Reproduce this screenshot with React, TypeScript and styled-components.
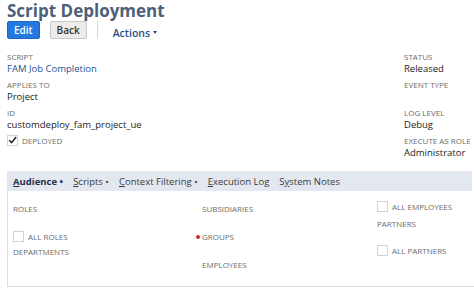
import React from 'react';
import styled, { createGlobalStyle } from 'styled-components';

const GlobalStyle = createGlobalStyle`
  html, body {
    margin: 0;
    padding: 0;
    background: #ffffff;
  }
  body {
    font-family: 'Open Sans', 'Liberation Sans', sans-serif;
    color: #222222;
  }
`;

const Page = styled.div`
  width: 474px;
  height: 294px;
  overflow: hidden;
  padding: 2px 0 0 7px;
  box-sizing: border-box;
`;

const Title = styled.h1`
  margin: 0;
  height: 17px;
  font-size: 17px;
  line-height: 17px;
  font-weight: 700;
  color: #4d5f79;
  white-space: nowrap;
`;

const ButtonRow = styled.div`
  display: flex;
  align-items: center;
  height: 18px;
  margin-top: 2px;
`;

const Button = styled.button<{ $primary?: boolean }>`
  height: 18px;
  padding: 0 6px;
  margin-right: 10px;
  border-radius: 2px;
  font-family: inherit;
  font-size: 10px;
  font-weight: 600;
  line-height: 16px;
  cursor: pointer;
  border: 1px solid ${({ $primary }) => ($primary ? '#1d67c4' : '#c9c9c9')};
  background: ${({ $primary }) => ($primary ? '#2379de' : '#ececec')};
  color: ${({ $primary }) => ($primary ? '#ffffff' : '#333333')};
`;

const Divider = styled.div`
  width: 1px;
  height: 18px;
  background: #d6d6d6;
  margin: 0 15px 0 0;
`;

const ActionsMenu = styled.span`
  font-size: 10.5px;
  font-weight: 600;
  color: #2c4f82;
  display: flex;
  align-items: center;
  gap: 3px;
  padding-top: 5px;
`;

const Caret = styled.span`
  width: 0;
  height: 0;
  border-left: 2.5px solid transparent;
  border-right: 2.5px solid transparent;
  border-top: 3px solid #2c4f82;
`;

const Fields = styled.div`
  display: flex;
  margin-top: 12px;
  height: 120px;
`;

const Column = styled.div<{ $width?: number }>`
  flex: ${({ $width }) => ($width ? `0 0 ${$width}px` : '1')};
`;

const Field = styled.div`
  margin-bottom: 4px;
`;

const Label = styled.div`
  font-size: 8px;
  line-height: 12px;
  height: 12px;
  text-transform: uppercase;
  color: #6b6b6b;
  white-space: nowrap;
`;

const Value = styled.div<{ $link?: boolean }>`
  font-size: 9.5px;
  line-height: 12px;
  height: 12px;
  color: ${({ $link }) => ($link ? '#25528f' : '#222222')};
  white-space: nowrap;
`;

const CheckRow = styled.div<{ $top?: number }>`
  display: flex;
  align-items: center;
  gap: 4px;
  margin-top: ${({ $top }) => $top ?? 0}px;
  height: 12px;
`;

const Box = styled.span`
  width: 11px;
  height: 11px;
  box-sizing: border-box;
  border: 1px solid #d3d3d3;
  background: #ffffff;
  display: inline-flex;
  align-items: center;
  justify-content: center;
`;

const CheckText = styled.span`
  font-size: 8px;
  color: #6b6b6b;
  text-transform: uppercase;
  white-space: nowrap;
`;

const TabBar = styled.div`
  display: flex;
  align-items: center;
  height: 20px;
  background: #e3e8f0;
  padding-left: 6px;
  margin-right: 2px;
`;

const Tab = styled.span<{ $active?: boolean }>`
  font-size: 9.5px;
  font-weight: ${({ $active }) => ($active ? 700 : 400)};
  color: ${({ $active }) => ($active ? '#26324a' : '#3a3a3a')};
  margin-right: 10px;
  white-space: nowrap;
  u {
    text-decoration-thickness: 1px;
    text-underline-offset: 1px;
  }
`;

const Panel = styled.div`
  border: 1px solid #dddddd;
  border-top: none;
  border-right: none;
  height: 96px;
  box-sizing: border-box;
  display: grid;
  grid-template-columns: 189px 175px 1fr;
  padding: 10px 0 0 5px;
`;

const PanelCol = styled.div``;

const PanelLabel = styled.div<{ $top?: number; $dot?: boolean }>`
  font-size: 8px;
  line-height: 12px;
  height: 12px;
  color: #6b6b6b;
  text-transform: uppercase;
  margin-top: ${({ $top }) => $top ?? 0}px;
  white-space: nowrap;
  position: relative;
  &::before {
    content: '';
    display: ${({ $dot }) => ($dot ? 'block' : 'none')};
    position: absolute;
    left: -6px;
    top: 4px;
    width: 4px;
    height: 4px;
    border-radius: 50%;
    background: #e0202a;
  }
`;

const TabLabel = ({ letter, rest, dot, active }: { letter: string; rest: string; dot?: boolean; active?: boolean }) => (
  <Tab $active={active}>
    <u>{letter}</u>
    {rest}
    {dot ? ' •' : ''}
  </Tab>
);

const Checkmark = () => (
  <svg width="10" height="10" viewBox="0 0 10 10">
    <path d="M1.3 5.2 L4 7.9 L9 1.6" fill="none" stroke="#222" strokeWidth="1.7" />
  </svg>
);

export default function App() {
  return (
    <Page>
      <GlobalStyle />
      <Title>Script Deployment</Title>
      <ButtonRow>
        <Button $primary>Edit</Button>
        <Button>Back</Button>
        <Divider />
        <ActionsMenu>
          Actions <Caret />
        </ActionsMenu>
      </ButtonRow>

      <Fields>
        <Column>
          <Field>
            <Label>Script</Label>
            <Value $link>FAM Job Completion</Value>
          </Field>
          <Field>
            <Label>Applies To</Label>
            <Value>Project</Value>
          </Field>
          <Field>
            <Label>ID</Label>
            <Value>customdeploy_fam_project_ue</Value>
          </Field>
          <CheckRow $top={-1}>
            <Box>
              <Checkmark />
            </Box>
            <CheckText>Deployed</CheckText>
          </CheckRow>
        </Column>
        <Column $width={70}>
          <Field>
            <Label>Status</Label>
            <Value>Released</Value>
          </Field>
          <Field>
            <Label>Event Type</Label>
            <Value />
          </Field>
          <Field>
            <Label>Log Level</Label>
            <Value>Debug</Value>
          </Field>
          <Field>
            <Label>Execute As Role</Label>
            <Value>Administrator</Value>
          </Field>
        </Column>
      </Fields>

      <TabBar>
        <TabLabel active letter="A" rest="udience" dot />
        <TabLabel letter="S" rest="cripts" dot />
        <TabLabel letter="C" rest="ontext Filtering" dot />
        <TabLabel letter="E" rest="xecution Log" />
        <Tab>
          S<u>y</u>stem Notes
        </Tab>
      </TabBar>

      <Panel>
        <PanelCol>
          <PanelLabel $top={2}>Roles</PanelLabel>
          <CheckRow $top={15}>
            <Box />
            <CheckText>All Roles</CheckText>
          </CheckRow>
          <PanelLabel $top={4}>Departments</PanelLabel>
        </PanelCol>
        <PanelCol>
          <PanelLabel $top={2}>Subsidiaries</PanelLabel>
          <PanelLabel $top={16} $dot>Groups</PanelLabel>
          <PanelLabel $top={16}>Employees</PanelLabel>
        </PanelCol>
        <PanelCol>
          <CheckRow $top={-1}>
            <Box />
            <CheckText>All Employees</CheckText>
          </CheckRow>
          <PanelLabel $top={6}>Partners</PanelLabel>
          <CheckRow $top={14}>
            <Box />
            <CheckText>All Partners</CheckText>
          </CheckRow>
        </PanelCol>
      </Panel>
    </Page>
  );
}
